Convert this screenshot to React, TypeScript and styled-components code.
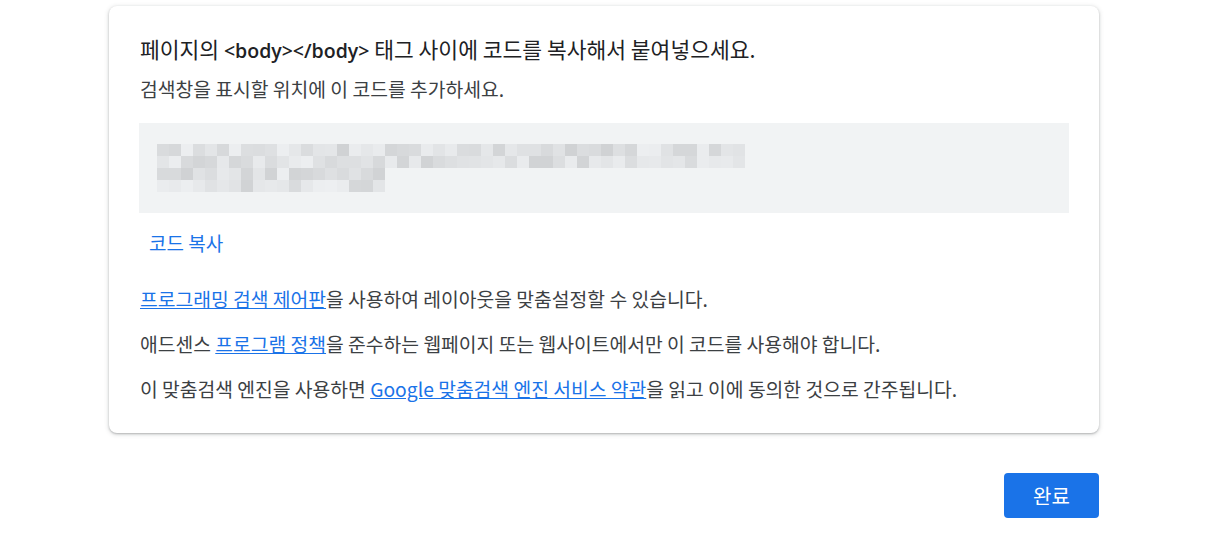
import styled, { createGlobalStyle } from "styled-components";

/*page reset + default font*/
const GlobalStyle = createGlobalStyle`
    body {
        margin: 0;
        background: #ffffff;
        font-family: "Noto Sans CJK KR", "Noto Sans", sans-serif;
    }
`;

const Page = styled.div`
    padding: 6px 0 0 109px;
    width: 990px;
`;

/*white card holding the snippet*/
const Card = styled.section`
    background: #ffffff;
    border-radius: 8px;
    box-shadow: 0 1px 2px rgba(60, 64, 67, 0.3), 0 1px 4px 1px rgba(60, 64, 67, 0.15);
    padding: 29px 30px 32px 31px;
    display: flex;
    flex-direction: column;
`;

const Title = styled.h2`
    margin: 0;
    font-size: 21.5px;
    line-height: 28px;
    font-weight: 400;
    color: #202124;
`;

const Tag = styled.span`
    font-family: "Open Sans", sans-serif;
    font-weight: 600;
    font-size: 19.5px;
`;

const Subtitle = styled.p`
    margin: 12px 0 0;
    font-size: 19.3px;
    line-height: 24px;
    color: #3c4043;
`;

/*grey box where the (blurred) code sits*/
const CodeBox = styled.div`
    margin: 22px 0 0 -1px;
    height: 90px;
    background: #f1f3f4;
    padding: 21px 18px 0;
    box-sizing: border-box;
`;

const PixelRow = styled.div`
    display: flex;
`;

const Pixel = styled.span<{ $shade: number }>`
    width: 12px;
    height: 12px;
    background: rgb(${p => p.$shade}, ${p => p.$shade + 2}, ${p => p.$shade + 4});
`;

const CopyButton = styled.button`
    align-self: flex-start;
    margin: 12px 0 0 -1px;
    padding: 6px 10px;
    border: none;
    background: none;
    font-family: inherit;
    font-size: 19px;
    line-height: 24px;
    color: #1a73e8;
    cursor: pointer;
`;

const Line = styled.p<{ $first?: boolean }>`
    margin: ${p => (p.$first ? "26px" : "21px")} 0 0;
    font-size: 19.3px;
    line-height: 24px;
    color: #3c4043;
`;

const Link = styled.a`
    color: #1a73e8;
    text-decoration: underline;
`;

const Footer = styled.div`
    display: flex;
    justify-content: flex-end;
    margin-top: 40px;
`;

const DoneButton = styled.button`
    width: 95px;
    height: 45px;
    border: none;
    border-radius: 4px;
    background: #1a73e8;
    color: #ffffff;
    font-family: inherit;
    font-size: 20px;
    cursor: pointer;
`;

/*cheap deterministic noise for the pixelated snippet*/
function shades(count: number, seed: number) {
    const out: number[] = [];
    let s = seed;
    for (let i = 0; i < count; i++) {
        s = (s * 9301 + 49297) % 233280;
        out.push(208 + Math.floor((s / 233280) * 30));
    }
    return out;
}

const rows = [
    shades(49, 3),
    shades(49, 11),
    shades(19, 27),
    shades(19, 42),
];

export default function App() {
    return (
        <Page>
            <GlobalStyle />
            <Card>
                <Title>
                    페이지의 <Tag>&lt;body&gt;&lt;/body&gt;</Tag> 태그 사이에 코드를 복사해서 붙여넣으세요.
                </Title>
                <Subtitle>검색창을 표시할 위치에 이 코드를 추가하세요.</Subtitle>
                <CodeBox>
                    {rows.map((row, r) => (
                        <PixelRow key={r}>
                            {row.map((v, i) => (
                                <Pixel key={i} $shade={v} />
                            ))}
                        </PixelRow>
                    ))}
                </CodeBox>
                <CopyButton>코드 복사</CopyButton>
                <Line $first>
                    <Link href="#">프로그래밍 검색 제어판</Link>을 사용하여 레이아웃을 맞춤설정할 수 있습니다.
                </Line>
                <Line>
                    애드센스 <Link href="#">프로그램 정책</Link>을 준수하는 웹페이지 또는 웹사이트에서만 이 코드를 사용해야 합니다.
                </Line>
                <Line>
                    이 맞춤검색 엔진을 사용하면 <Link href="#">Google 맞춤검색 엔진 서비스 약관</Link>을 읽고 이에 동의한 것으로 간주됩니다.
                </Line>
            </Card>
            <Footer>
                <DoneButton>완료</DoneButton>
            </Footer>
        </Page>
    );
}
